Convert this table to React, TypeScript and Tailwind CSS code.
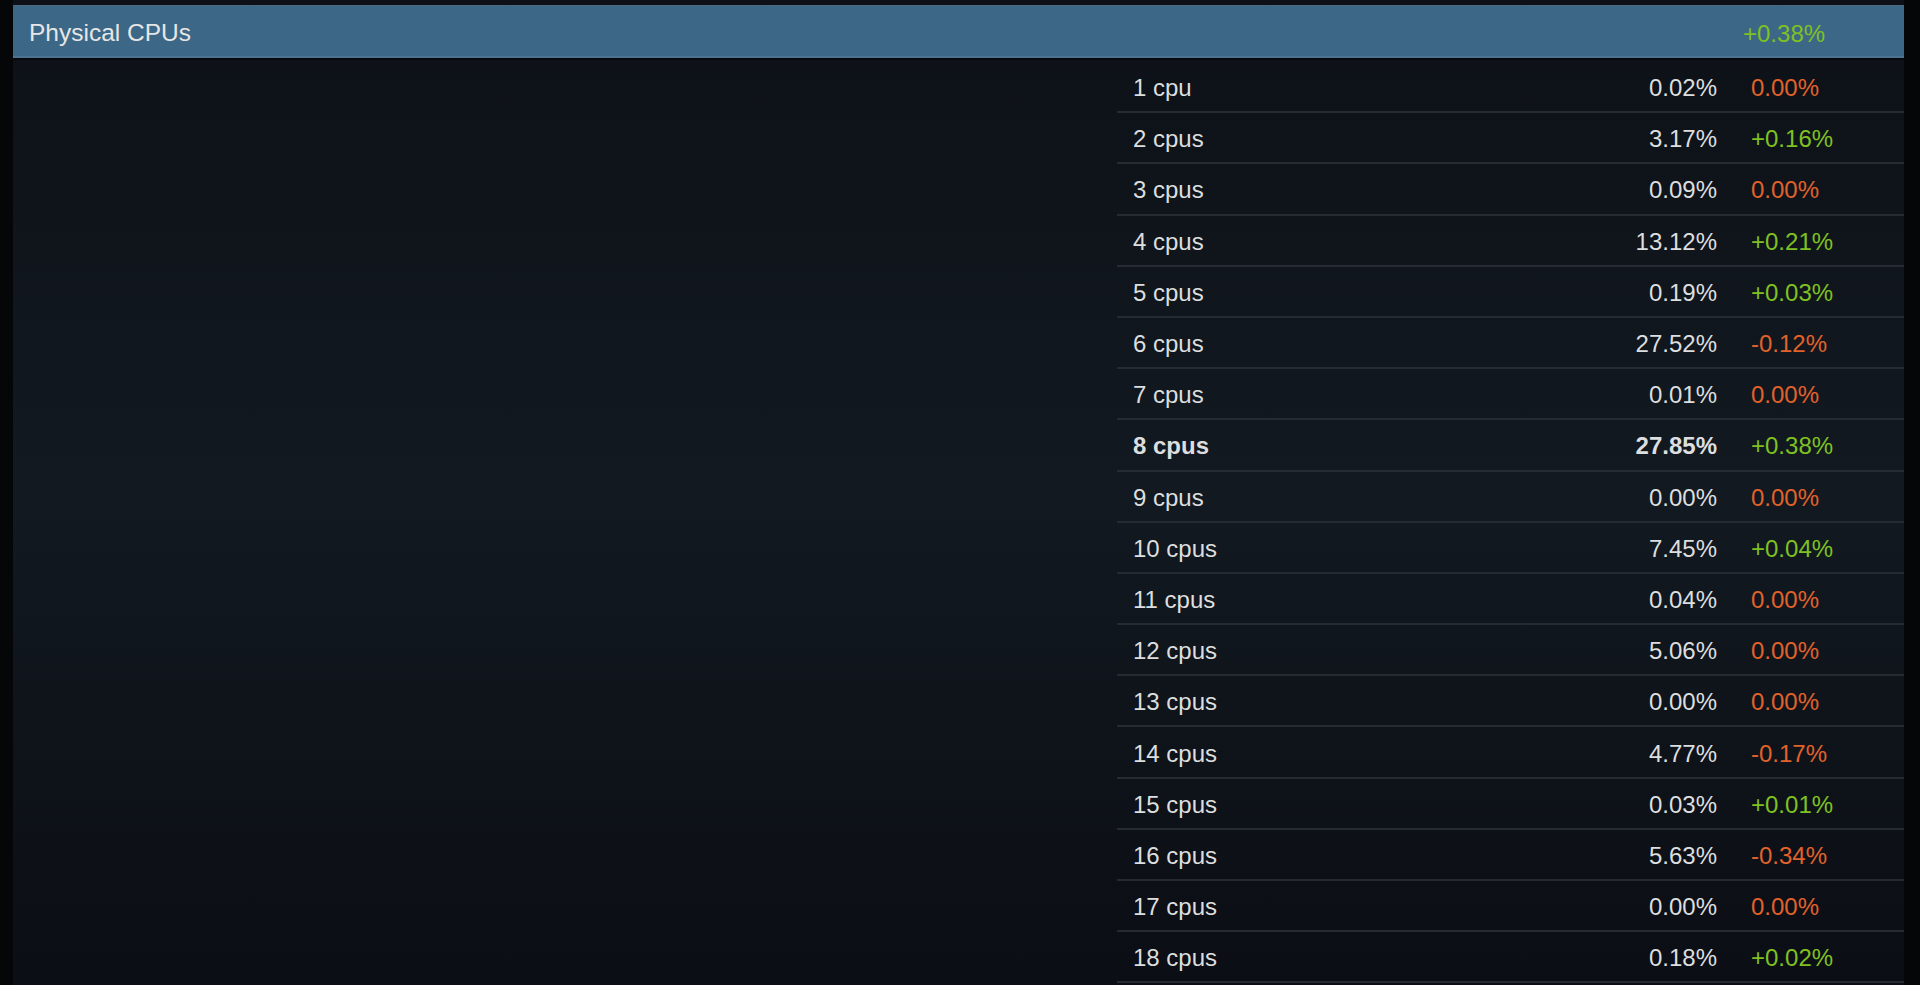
const rows: { label: string; value: string; change: string; bold?: boolean }[] = [
  { label: '1 cpu', value: '0.02%', change: '0.00%' },
  { label: '2 cpus', value: '3.17%', change: '+0.16%' },
  { label: '3 cpus', value: '0.09%', change: '0.00%' },
  { label: '4 cpus', value: '13.12%', change: '+0.21%' },
  { label: '5 cpus', value: '0.19%', change: '+0.03%' },
  { label: '6 cpus', value: '27.52%', change: '-0.12%' },
  { label: '7 cpus', value: '0.01%', change: '0.00%' },
  { label: '8 cpus', value: '27.85%', change: '+0.38%', bold: true },
  { label: '9 cpus', value: '0.00%', change: '0.00%' },
  { label: '10 cpus', value: '7.45%', change: '+0.04%' },
  { label: '11 cpus', value: '0.04%', change: '0.00%' },
  { label: '12 cpus', value: '5.06%', change: '0.00%' },
  { label: '13 cpus', value: '0.00%', change: '0.00%' },
  { label: '14 cpus', value: '4.77%', change: '-0.17%' },
  { label: '15 cpus', value: '0.03%', change: '+0.01%' },
  { label: '16 cpus', value: '5.63%', change: '-0.34%' },
  { label: '17 cpus', value: '0.00%', change: '0.00%' },
  { label: '18 cpus', value: '0.18%', change: '+0.02%' },
];

function ChangeCell({ change }: { change: string }) {
  // positive changes are green, zero and negative are orange
  const up = change.startsWith('+');
  return <span className={up ? 'text-[#7fc122]' : 'text-[#e1622b]'}>{change}</span>;
}

export default function App() {
  return (
    <div
      className="w-full h-[985px] overflow-hidden bg-[#050608] flex pl-[13px] pr-[16px]"
      style={{ fontFamily: '"Liberation Sans", Arial, sans-serif' }}
    >
      <div className="flex-1 flex flex-col bg-gradient-to-b from-[#0d1117] via-[#121920] to-[#0b0e14]">
        <div className="h-[5px]" />

        {/* Category header */}
        <div className="h-[53px] flex items-center pt-[5px] bg-[#3c6786] border-t border-[#4a6a82] border-b-2 border-b-[#4c7391]">
          <span className="flex-1 pl-4 text-[24.5px] text-[#e6e6e6]">Physical CPUs</span>
          <span className="w-[161px] text-[24px] text-[#7fc122]">+0.38%</span>
        </div>
        <div className="h-[2px] bg-[#07090c]" />

        {/* Rows */}
        <div className="ml-auto w-[787px] flex flex-col pt-[2px]">
          {rows.map((row) => (
            <div
              key={row.label}
              className={`h-[51.2px] flex items-center pt-[3px] border-b-2 border-[#262b32] text-[24px] text-[#dcdedf] ${
                row.bold ? 'font-bold' : ''
              }`}
            >
              <span className="flex-1 pl-4">{row.label}</span>
              <span className="text-right">{row.value}</span>
              <span className="w-[187px] pl-[34px] font-normal">
                <ChangeCell change={row.change} />
              </span>
            </div>
          ))}
        </div>
      </div>
    </div>
  );
}
